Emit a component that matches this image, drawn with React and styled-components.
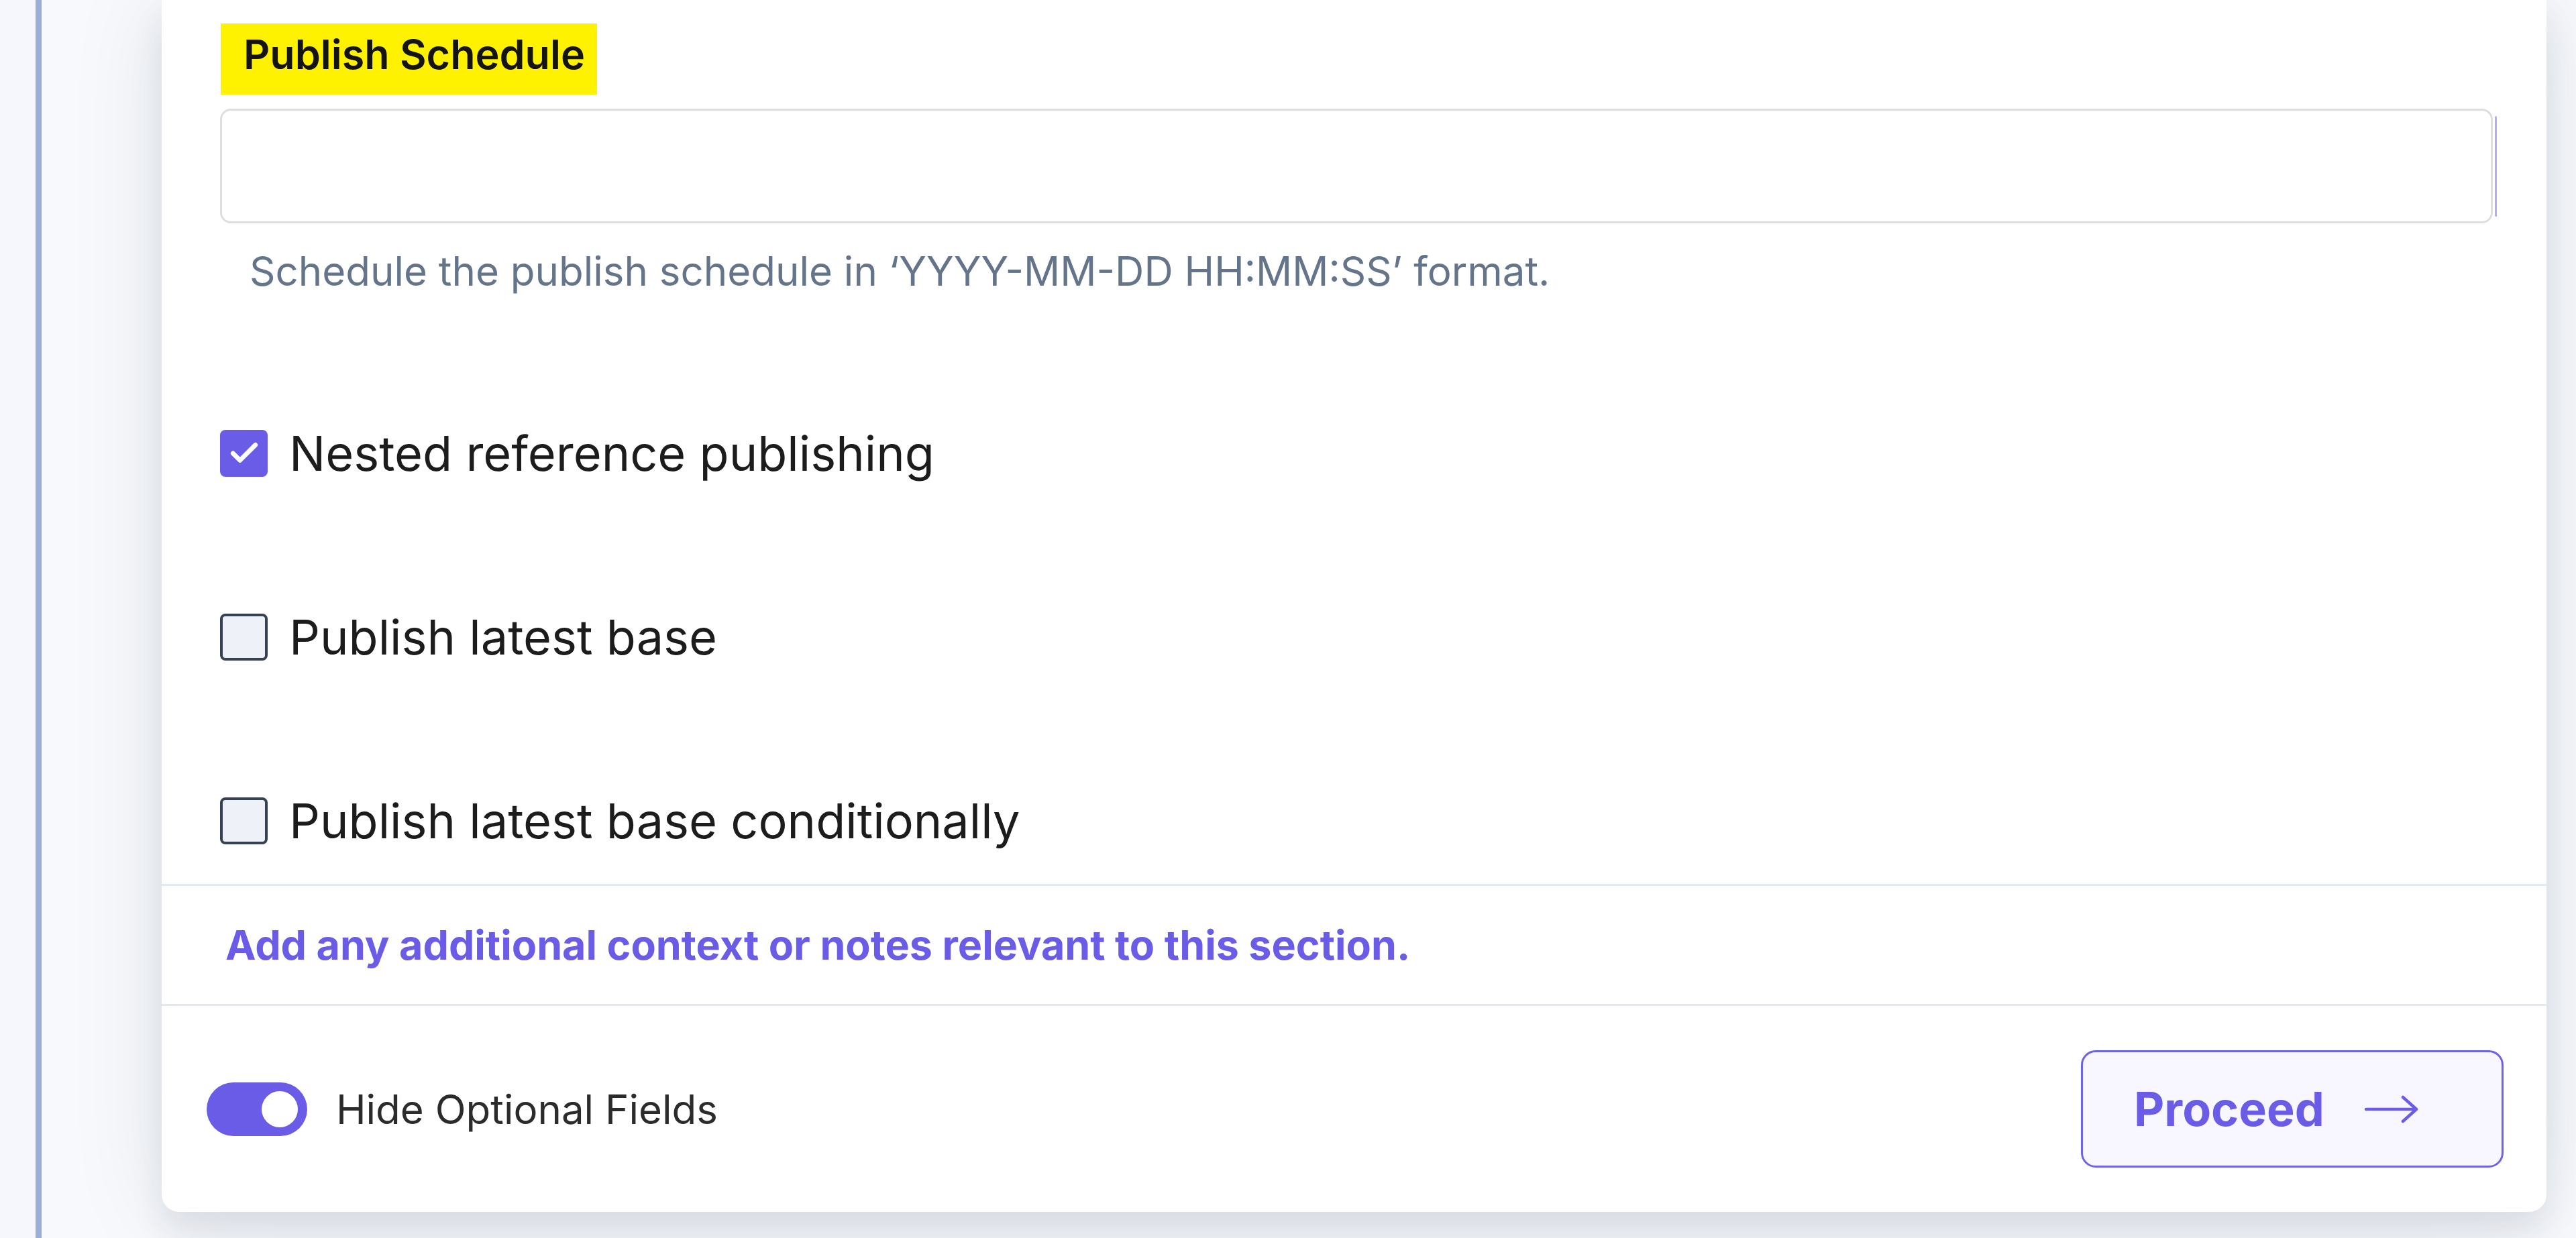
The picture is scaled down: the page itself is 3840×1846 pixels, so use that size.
import React from 'react';
import styled, { createGlobalStyle } from 'styled-components';

const Global = createGlobalStyle`
  html, body { margin: 0; padding: 0; }
  body {
    background: #f7f9fc;
    font-family: Inter, "Noto Sans", "Liberation Sans", sans-serif;
    overflow: hidden;
  }
  * { box-sizing: border-box; }
`;

const Page = styled.div`
  display: flex;
  width: 3840px;
  height: 1846px;
  overflow: hidden;
  background: #f7f9fc;
`;

const Rail = styled.aside`
  flex: none;
  width: 62px;
  background: #f5f7fc;
  border-right: 9px solid #9aaed6;
`;

const Main = styled.main`
  flex: 1;
  display: flex;
  flex-direction: column;
  justify-content: flex-end;
  padding: 0 44px 39px 179px;
  overflow: hidden;
`;

const Card = styled.section`
  flex: none;
  background: #ffffff;
  border-radius: 0 0 26px 26px;
  box-shadow: 0 0 150px rgba(25, 35, 70, 0.09), 0 30px 50px rgba(25, 35, 70, 0.09);
  display: flex;
  flex-direction: column;
`;

const Body = styled.div`
  display: flex;
  flex-direction: column;
  padding: 35px 80px 59px 87px;
`;

const FieldLabel = styled.label`
  align-self: flex-start;
  margin-left: 1px;
  background: #fff200;
  color: #141414;
  font-size: 61px;
  font-weight: 600;
  line-height: 92px;
  padding: 0 18px 14px 34px;
`;

const InputWrap = styled.div`
  position: relative;
  margin-top: 21px;
  &::after {
    content: '';
    position: absolute;
    right: -6px;
    top: 11px;
    bottom: 10px;
    width: 3px;
    background: #b3adf6;
    border-radius: 2px;
  }
`;

const TextInput = styled.input`
  display: block;
  width: 100%;
  height: 171px;
  border: 3px solid #dedede;
  border-radius: 16px;
  background: #fff;
  outline: none;
  font: inherit;
`;

const Helper = styled.p`
  margin: 31px 0 0 44px;
  font-size: 60px;
  line-height: 80px;
  color: #64748b;
`;

const CheckList = styled.div`
  display: flex;
  flex-direction: column;
  gap: 204px;
  margin-top: 197px;
`;

const CheckRow = styled.div`
  display: flex;
  align-items: center;
  gap: 32px;
  height: 70px;
`;

const Box = styled.span`
  flex: none;
  width: 71px;
  height: 70px;
  border-radius: 8px;
  display: flex;
  align-items: center;
  justify-content: center;
  background: ${(p) => (p.$checked ? '#6b5ce7' : '#eef1f8')};
  border: ${(p) => (p.$checked ? 'none' : '4px solid #364152')};
`;

const CheckText = styled.span`
  font-size: 72px;
  line-height: 1;
  color: #1c1c1c;
`;

const Note = styled.div`
  height: 182px;
  display: flex;
  align-items: center;
  padding: 0 95px;
  border-top: 3px solid #e3e8f2;
  border-bottom: 3px solid #e3e8f2;
  color: #6b5ce7;
  font-size: 61px;
  font-weight: 700;
`;

const Footer = styled.footer`
  height: 307px;
  display: flex;
  align-items: center;
  justify-content: space-between;
  padding: 0 64px 0 67px;
`;

const ToggleGroup = styled.div`
  display: flex;
  align-items: center;
  gap: 43px;
`;

const Toggle = styled.span`
  width: 150px;
  height: 80px;
  border-radius: 40px;
  background: #6b5ce7;
  display: flex;
  align-items: center;
  justify-content: flex-end;
  padding-right: 14px;
  &::before {
    content: '';
    width: 54px;
    height: 54px;
    border-radius: 50%;
    background: #ffffff;
  }
`;

const ToggleText = styled.span`
  font-size: 60px;
  color: #2b2b2b;
`;

const ProceedButton = styled.button`
  width: 630px;
  height: 175px;
  display: flex;
  align-items: center;
  gap: 60px;
  padding: 0 0 0 76px;
  border: 3px solid #6f62ea;
  border-radius: 22px;
  background: #f8f7ff;
  color: #6b5ce7;
  font-family: inherit;
  font-size: 70px;
  font-weight: 700;
  cursor: pointer;
`;

const Check = () => (
  <svg width="50" height="50" viewBox="0 0 24 24" fill="none" stroke="#ffffff" strokeWidth="3.3" strokeLinecap="round" strokeLinejoin="round">
    <path d="M20 6 9 17l-5-5" />
  </svg>
);

const Arrow = () => (
  <svg width="80" height="44" viewBox="0 0 80 44" fill="none" stroke="#6b5ce7" strokeWidth="4.5" strokeLinecap="round" strokeLinejoin="round">
    <path d="M2 22 H77 M57 4 L77 22 L57 40" />
  </svg>
);

const options = [
  { label: 'Nested reference publishing', checked: true },
  { label: 'Publish latest base', checked: false },
  { label: 'Publish latest base conditionally', checked: false },
];

export default function App() {
  return (
    <>
      <Global />
      <Page>
        <Rail />
        <Main>
          <Card>
            <Body>
              <FieldLabel>Publish Schedule</FieldLabel>
              <InputWrap>
                <TextInput type="text" />
              </InputWrap>
              <Helper>Schedule the publish schedule in ‘YYYY-MM-DD HH:MM:SS’ format.</Helper>
              <CheckList>
                {options.map((o) => (
                  <CheckRow key={o.label}>
                    <Box $checked={o.checked}>{o.checked && <Check />}</Box>
                    <CheckText>{o.label}</CheckText>
                  </CheckRow>
                ))}
              </CheckList>
            </Body>
            <Note>Add any additional context or notes relevant to this section.</Note>
            <Footer>
              <ToggleGroup>
                <Toggle />
                <ToggleText>Hide Optional Fields</ToggleText>
              </ToggleGroup>
              <ProceedButton>
                Proceed
                <Arrow />
              </ProceedButton>
            </Footer>
          </Card>
        </Main>
      </Page>
    </>
  );
}
